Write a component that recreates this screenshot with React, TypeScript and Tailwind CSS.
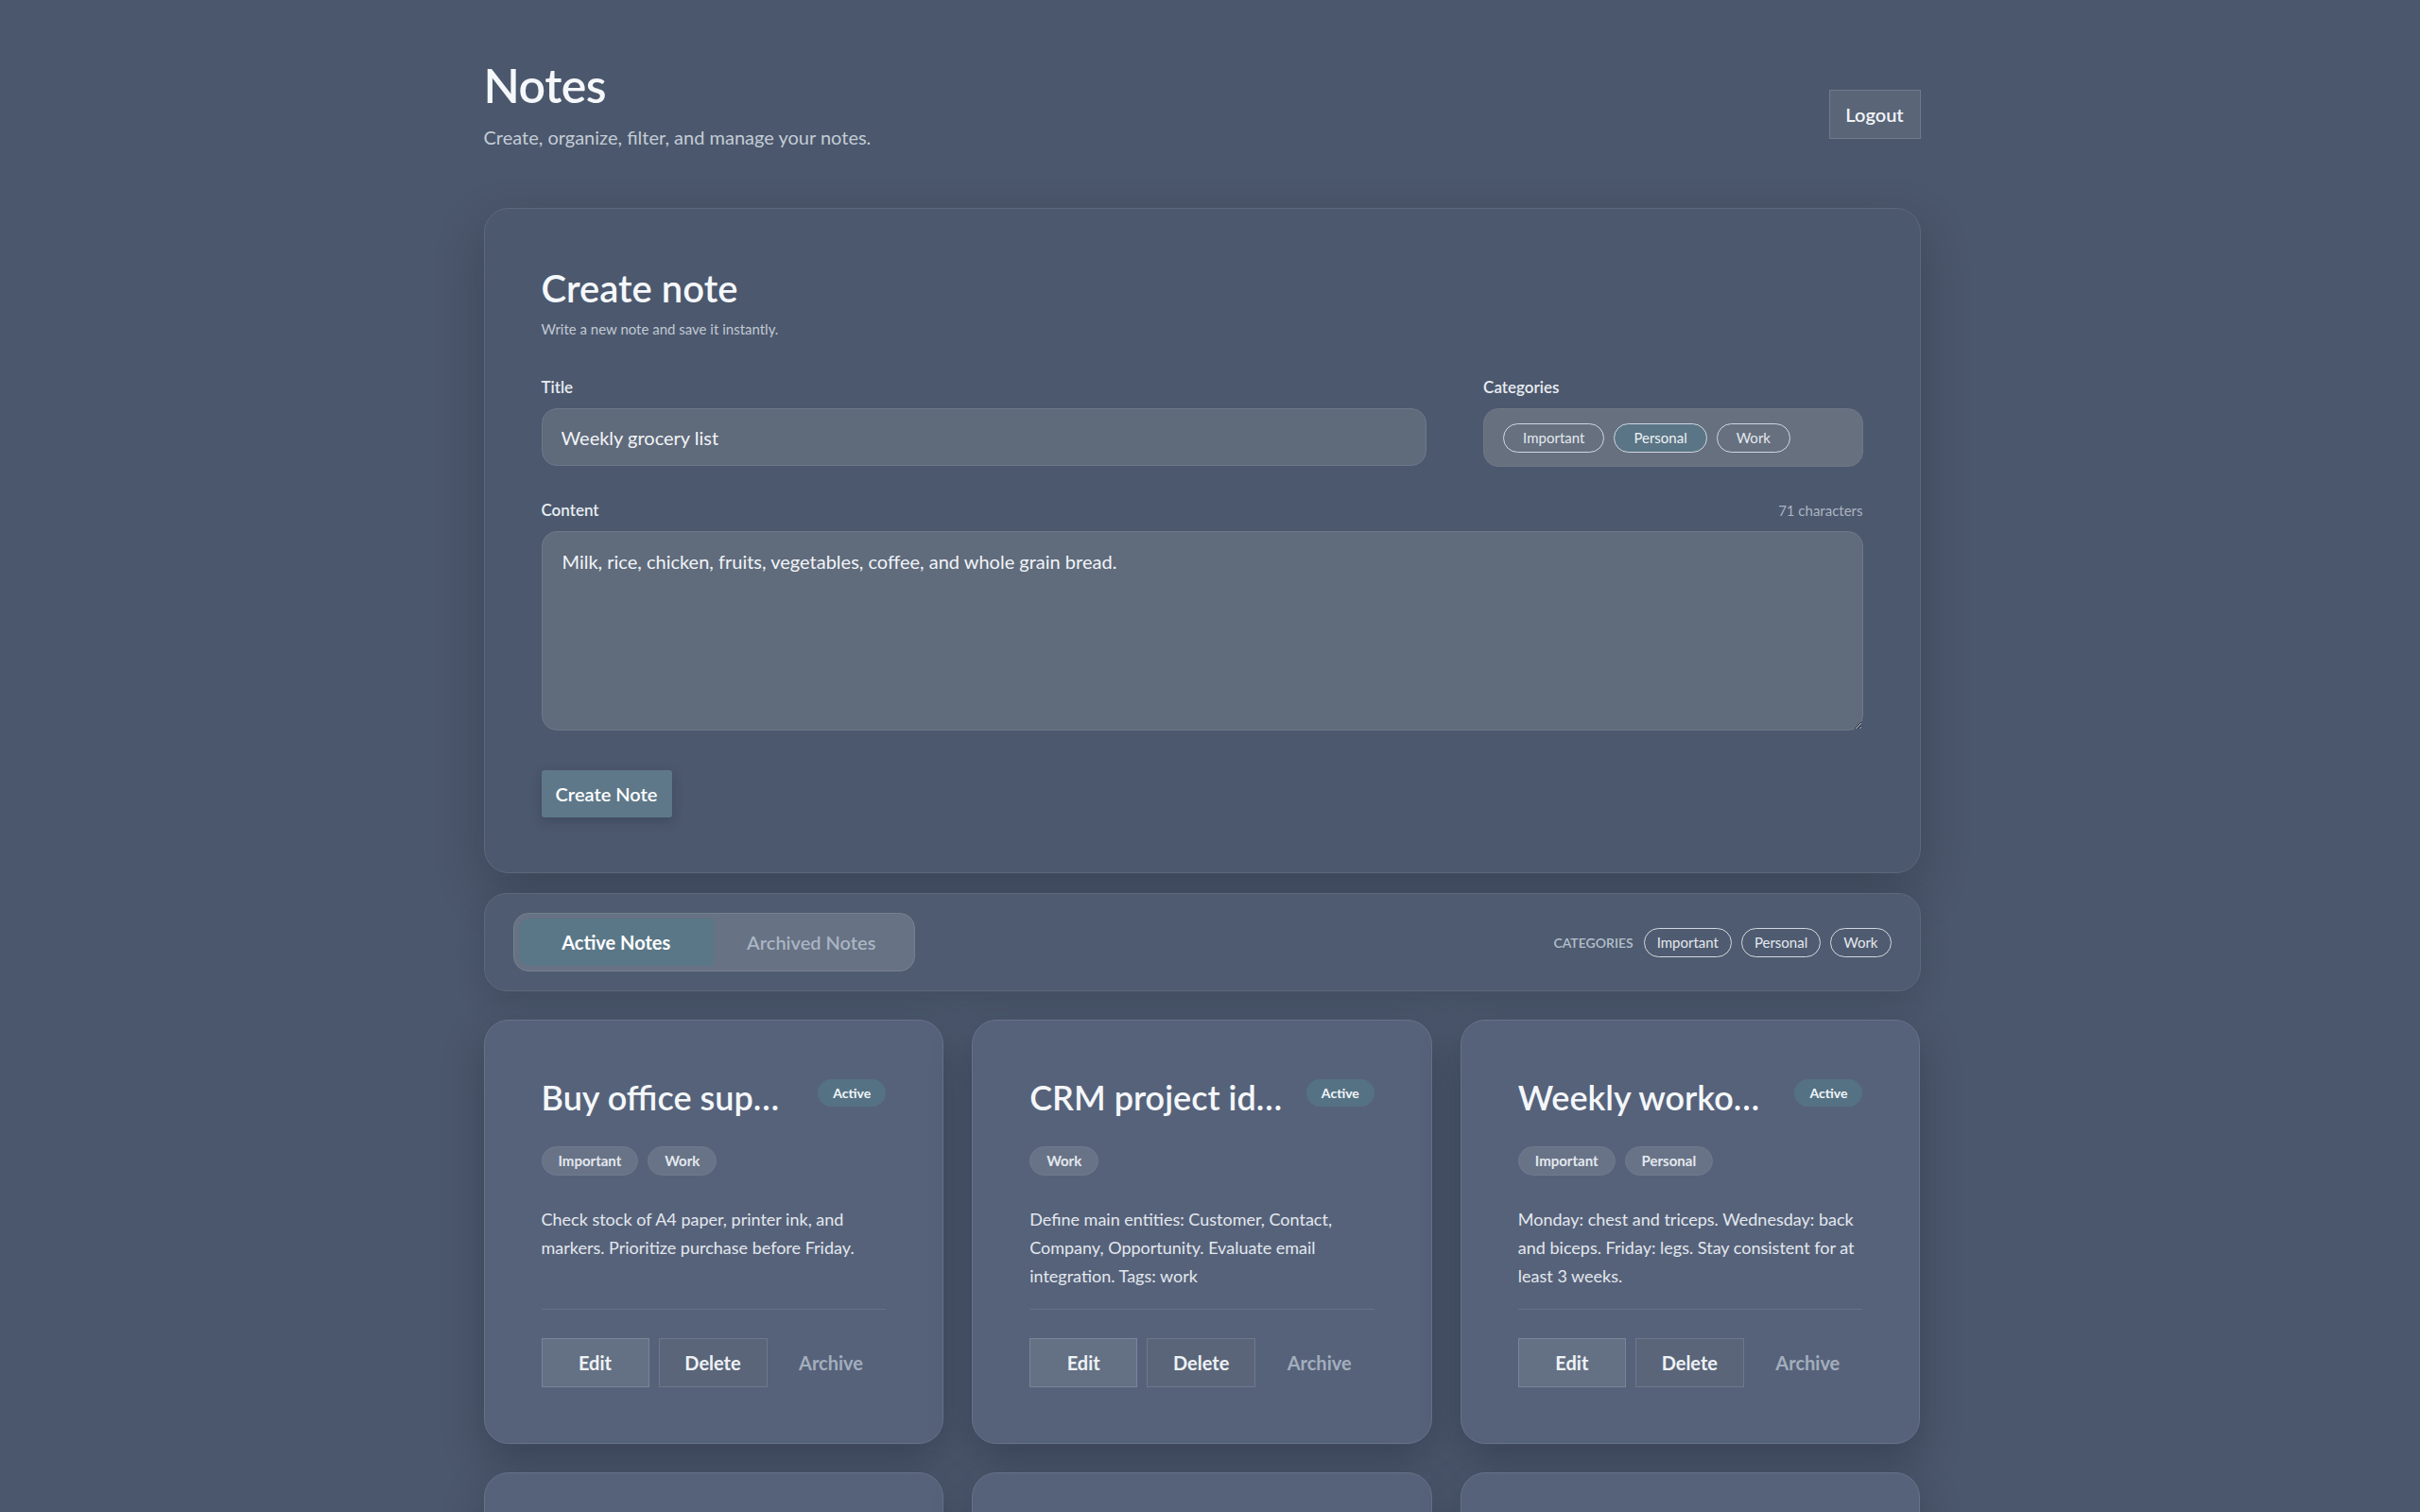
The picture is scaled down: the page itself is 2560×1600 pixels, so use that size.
import React, { useState } from 'react';

type Category = 'Important' | 'Personal' | 'Work';

interface Note {
  id: number;
  title: string;
  content: string;
  categories: Category[];
  archived: boolean;
}

const CATEGORIES: Category[] = ['Important', 'Personal', 'Work'];

const INITIAL_NOTES: Note[] = [
  {
    id: 1,
    title: 'Buy office supplies',
    content: 'Check stock of A4 paper, printer ink, and markers. Prioritize purchase before Friday.',
    categories: ['Important', 'Work'],
    archived: false,
  },
  {
    id: 2,
    title: 'CRM project ideas',
    content: 'Define main entities: Customer, Contact, Company, Opportunity. Evaluate email integration. Tags: work',
    categories: ['Work'],
    archived: false,
  },
  {
    id: 3,
    title: 'Weekly workout plan',
    content: 'Monday: chest and triceps. Wednesday: back and biceps. Friday: legs. Stay consistent for at least 3 weeks.',
    categories: ['Important', 'Personal'],
    archived: false,
  },
  {
    id: 4,
    title: 'Dentist appointment',
    content: 'Call the clinic on Monday morning to confirm the cleaning appointment for next week.',
    categories: ['Personal'],
    archived: false,
  },
  {
    id: 5,
    title: 'Quarterly report draft',
    content: 'Collect sales figures from each region and prepare the first draft for the team review.',
    categories: ['Important', 'Work'],
    archived: false,
  },
  {
    id: 6,
    title: 'Books to read',
    content: 'Atomic Habits, Deep Work, The Pragmatic Programmer. Start with one chapter per day.',
    categories: ['Personal'],
    archived: false,
  },
  {
    id: 7,
    title: 'Team meeting notes',
    content: 'Review sprint goals, assign pending tickets and schedule the demo for Thursday.',
    categories: ['Work'],
    archived: false,
  },
  {
    id: 8,
    title: 'Birthday gift ideas',
    content: 'Headphones, a cooking class voucher or a framed photo album for the family.',
    categories: ['Personal'],
    archived: false,
  },
];

const NoteCard: React.FC<{ note: Note; onArchive: (id: number) => void; onDelete: (id: number) => void }> = ({
  note,
  onArchive,
  onDelete,
}) => (
  <div className="flex flex-col rounded-[26px] border border-[#66718a] bg-[#56627a] px-[60px] pt-[60px] pb-[59px] shadow-[0_18px_40px_rgba(25,33,48,0.35)]">
    <div className="flex items-start justify-between gap-[24px]">
      <h3 className="min-w-0 truncate text-[36px] font-semibold leading-[1.2] text-[#f4f7fa]">{note.title}</h3>
      <span className="mt-[2px] h-[29px] w-[72px] shrink-0 rounded-full bg-[#557284] text-center text-[14px] font-bold leading-[29px] text-[#f2f6f9]">
        {note.archived ? 'Archived' : 'Active'}
      </span>
    </div>
    <div className="mt-[30px] flex gap-[10px]">
      {note.categories.map(c => (
        <span
          key={c}
          className="h-[31px] rounded-full border border-[#6f7a8e] bg-[#687387] px-[17px] text-[15px] font-bold leading-[29px] text-[#e3e8ee]"
        >
          {c}
        </span>
      ))}
    </div>
    <p className="mt-[31px] text-[18px] leading-[30px] text-[#e3e8ee]">{note.content}</p>
    <div className="mt-auto pt-[20px]">
      <div className="flex gap-[10px] border-t border-[#65708a] pt-[30px]">
        <button className="h-[52px] w-[114px] border border-[#7a8599] bg-[#647083] text-[20px] font-bold text-[#eef2f6]">
          Edit
        </button>
        <button
          onClick={() => onDelete(note.id)}
          className="h-[52px] w-[115px] border border-[#6d788c] bg-[#5a6579] text-[20px] font-bold text-[#eef2f6]"
        >
          Delete
        </button>
        <button
          onClick={() => onArchive(note.id)}
          className="h-[52px] w-[115px] text-[20px] font-bold text-[#a3aebd]"
        >
          {note.archived ? 'Restore' : 'Archive'}
        </button>
      </div>
    </div>
  </div>
);

export default function App() {
  const [notes, setNotes] = useState<Note[]>(INITIAL_NOTES);
  const [title, setTitle] = useState('Weekly grocery list');
  const [content, setContent] = useState('Milk, rice, chicken, fruits, vegetables, coffee, and whole grain bread.');
  const [selected, setSelected] = useState<Category[]>(['Personal']);
  const [tab, setTab] = useState<'active' | 'archived'>('active');
  const [filter, setFilter] = useState<Category | null>(null);

  const toggleCategory = (c: Category) =>
    setSelected(prev => (prev.includes(c) ? prev.filter(x => x !== c) : [...prev, c]));

  const handleCreate = () => {
    if (!title.trim()) return;
    setNotes(prev => [
      { id: Date.now(), title, content, categories: selected, archived: false },
      ...prev,
    ]);
    setTitle('');
    setContent('');
    setSelected([]);
  };

  const visible = notes.filter(
    n => n.archived === (tab === 'archived') && (!filter || n.categories.includes(filter))
  );

  return (
    <div className="h-screen overflow-y-auto bg-[#4b576c] pr-[17px] font-['Lato',sans-serif] text-[#eef2f6] [scrollbar-color:#7f8a9b_#4b576c]">
      <div className="mx-auto w-[1520px] pt-[60px] pb-[80px]">
        {/* Header */}
        <header className="flex items-start justify-between">
          <div>
            <h1 className="text-[50px] font-semibold leading-[1.2] tracking-[-0.01em] text-[#f5f8fb]">Notes</h1>
            <p className="mt-[10px] text-[20px] leading-[30px] text-[#c3ccd6]">
              Create, organize, filter, and manage your notes.
            </p>
          </div>
          <button className="mt-[35px] h-[52px] w-[97px] border border-[#6f7a8c] bg-[#5a6578] text-[20px] font-semibold text-[#f1f4f7]">
            Logout
          </button>
        </header>

        {/* Create note form */}
        <section className="mt-[60px] rounded-[26px] border border-[#5d687b] bg-[#4c586e] px-[60px] pt-[60px] pb-[58px] shadow-[0_20px_50px_rgba(25,33,48,0.3)]">
          <h2 className="text-[40px] font-semibold leading-[48px] text-[#f5f8fb]">Create note</h2>
          <p className="mt-[9px] text-[15px] leading-[20px] text-[#c0c9d3]">Write a new note and save it instantly.</p>

          <div className="mt-[40px] grid grid-cols-[7fr_3fr] gap-x-[60px]">
            <div>
              <label className="block text-[17px] font-semibold leading-[24px] text-[#e8edf2]">Title</label>
              <input
                value={title}
                onChange={e => setTitle(e.target.value)}
                className="mt-[10px] h-[61px] w-full rounded-[16px] border border-[#6d788a] bg-[#5f6a7b] px-[20px] text-[20px] text-[#f1f4f7] outline-none"
              />
            </div>
            <div>
              <label className="block text-[17px] font-semibold leading-[24px] text-[#e8edf2]">Categories</label>
              <div className="mt-[10px] flex h-[62px] items-center gap-[10px] rounded-[16px] border border-[#6d7787] bg-[#66707f] px-[20px]">
                {CATEGORIES.map(c => (
                  <button
                    key={c}
                    onClick={() => toggleCategory(c)}
                    className={
                      selected.includes(c)
                        ? 'h-[31px] rounded-full border border-[#cfd7e0] bg-[#5a7585] px-[20px] text-[15px] text-[#eef2f6]'
                        : 'h-[31px] rounded-full border border-[#cfd7e0] px-[20px] text-[15px] text-[#e3e8ee]'
                    }
                  >
                    {c}
                  </button>
                ))}
              </div>
            </div>
          </div>

          <div className="mt-[34px] flex items-center justify-between">
            <label className="text-[17px] font-semibold leading-[24px] text-[#e8edf2]">Content</label>
            <span className="text-[15px] text-[#aab4c1]">{content.length} characters</span>
          </div>
          <textarea
            value={content}
            onChange={e => setContent(e.target.value)}
            className="mt-[10px] block h-[211px] w-full rounded-[16px] border border-[#6d788a] bg-[#606b7c] px-[21px] py-[16px] text-[20px] leading-[1.5] text-[#f1f4f7] outline-none"
          />

          <button
            onClick={handleCreate}
            className="mt-[42px] h-[50px] w-[138px] rounded-[3px] bg-[#5e7889] text-[20px] font-semibold text-white shadow-[0_4px_12px_rgba(25,33,48,0.25)]"
          >
            Create Note
          </button>
        </section>

        {/* Tabs and category filter */}
        <div className="mt-[21px] flex items-center justify-between rounded-[24px] border border-[#5d687a] bg-[#4f5b70] px-[30px] py-[20px] shadow-[0_10px_30px_rgba(25,33,48,0.2)]">
          <div className="grid h-[62px] w-[425px] grid-cols-2 rounded-[16px] border border-[#75808f] bg-[#677284] p-[5px]">
            <button
              onClick={() => setTab('active')}
              className={
                tab === 'active'
                  ? 'rounded-l-[11px] bg-[#5a7787] text-[20px] font-bold text-white'
                  : 'text-[20px] font-semibold text-[#aab5c3]'
              }
            >
              Active Notes
            </button>
            <button
              onClick={() => setTab('archived')}
              className={
                tab === 'archived'
                  ? 'rounded-r-[11px] bg-[#5a7787] text-[20px] font-bold text-white'
                  : 'text-[20px] font-semibold text-[#aab5c3]'
              }
            >
              Archived Notes
            </button>
          </div>
          <div className="flex items-center gap-[10px]">
            <span className="mr-[1px] text-[14px] font-semibold uppercase text-[#b3bfcc]">Categories</span>
            {CATEGORIES.map(c => (
              <button
                key={c}
                onClick={() => setFilter(f => (f === c ? null : c))}
                className={
                  filter === c
                    ? 'h-[31px] rounded-full border border-[#cfd7e0] bg-[#5a7585] px-[13px] text-[15px] text-white'
                    : 'h-[31px] rounded-full border border-[#cfd7e0] px-[13px] text-[15px] text-[#e3e8ee]'
                }
              >
                {c}
              </button>
            ))}
          </div>
        </div>

        {/* Notes grid */}
        <div className="mt-[30px] grid grid-cols-3 gap-[30px]">
          {visible.map(note => (
            <NoteCard
              key={note.id}
              note={note}
              onDelete={id => setNotes(prev => prev.filter(n => n.id !== id))}
              onArchive={id => setNotes(prev => prev.map(n => (n.id === id ? { ...n, archived: !n.archived } : n)))}
            />
          ))}
        </div>
      </div>
    </div>
  );
}
